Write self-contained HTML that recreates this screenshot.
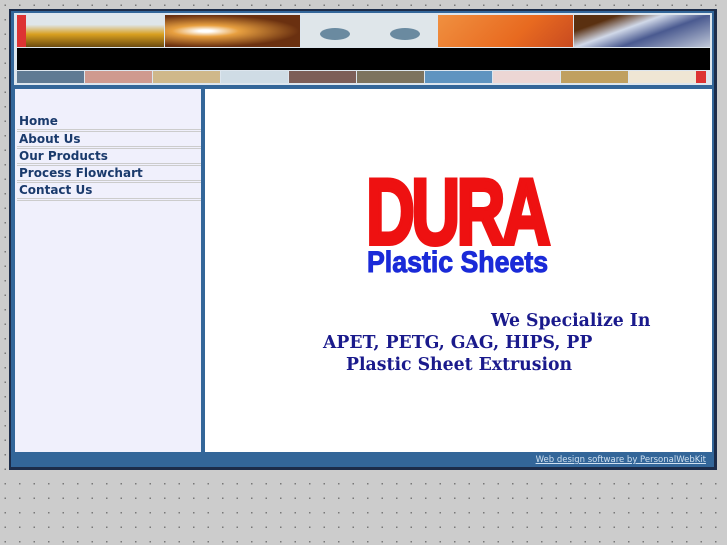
<!DOCTYPE html>
<html><head><style>
body{margin:0;width:727px;height:545px;background-color:#cccccc;background-image:radial-gradient(circle,#777 0.7px,transparent 1px);background-size:14.5px 14.5px;background-position:-2px -2px;position:relative;overflow:hidden;font-family:"DejaVu Sans",sans-serif}
.a{position:absolute}
.t{font-family:'DejaVu Serif',serif;font-weight:bold;font-size:17.3px;color:#1a1a8c;line-height:20px;position:absolute}
</style></head><body>
<div class="a" style="left:9px;top:9px;width:708px;height:461px;background:#1c2c4a"></div>
<div class="a" style="left:11px;top:11px;width:703px;height:456px;background:#336699"></div>
<div class="a" style="left:14px;top:13px;width:698px;height:72px;background:#dde6ee"></div>
<div class="a" style="left:17px;top:15px;width:9px;height:32px;background:#d33"></div>
<div class="a" style="left:26px;top:15px;width:138px;height:32px;background:linear-gradient(180deg,#dfe6ea 30%,#d9a020 60%,#6a4a10)"></div>
<div class="a" style="left:165px;top:15px;width:135px;height:32px;background:radial-gradient(ellipse at 30% 50%,#fff 5%,#e8a040 25%,#6a3010 70%)"></div>
<div class="a" style="left:301px;top:15px;width:136px;height:32px;background:#dfe6ea"></div>
<div class="a" style="left:320px;top:28px;width:30px;height:12px;border-radius:50%;background:#6a8aa0"></div>
<div class="a" style="left:390px;top:28px;width:30px;height:12px;border-radius:50%;background:#6a8aa0"></div>
<div class="a" style="left:438px;top:15px;width:135px;height:32px;background:linear-gradient(135deg,#f09040,#e86a20 60%,#c84a20)"></div>
<div class="a" style="left:574px;top:15px;width:136px;height:32px;background:linear-gradient(160deg,#5a3010 20%,#d0d8e8 40%,#4a5a90 60%,#c0c8d8)"></div>
<div class="a" style="left:17px;top:48px;width:693px;height:22px;background:#000"></div>
<div class="a" style="left:17px;top:71px;height:12px;display:flex;width:693px">
<div style="width:67px;background:#5f7a93;margin-right:1px"></div><div style="width:67px;background:#cf9a8f;margin-right:1px"></div><div style="width:67px;background:#cfb88a;margin-right:1px"></div><div style="width:67px;background:#cfdce5;margin-right:1px"></div><div style="width:67px;background:#7d5e58;margin-right:1px"></div><div style="width:67px;background:#7d735e;margin-right:1px"></div><div style="width:67px;background:#5f94c0;margin-right:1px"></div><div style="width:67px;background:#ecd6d4;margin-right:1px"></div><div style="width:67px;background:#c0a060;margin-right:1px"></div><div style="width:67px;background:#efe6d4"></div><div style="width:10px;background:#d33"></div>
</div>
<div class="a" style="left:15px;top:89px;width:186px;height:363px;background:#f0f0fc"></div>
<div class="a" style="left:205px;top:89px;width:507px;height:363px;background:#fff"></div>
<div class="a" style="left:17px;top:114px;width:184px;font-weight:bold;font-size:12px;color:#1a3a6c">
<div style="height:15px;line-height:15px;padding-left:2px;border-bottom:3px double #ccc">Home</div>
<div style="height:14px;line-height:15px;padding-left:2px;border-bottom:3px double #ccc">About Us</div>
<div style="height:14px;line-height:15px;padding-left:2px;border-bottom:3px double #ccc">Our Products</div>
<div style="height:14px;line-height:15px;padding-left:2px;border-bottom:3px double #ccc">Process Flowchart</div>
<div style="height:15px;line-height:15px;padding-left:2px;border-bottom:3px double #ccc">Contact Us</div>
</div>
<div class="a" style="left:366px;top:165px;font-family:'Liberation Sans',sans-serif;font-weight:bold;font-size:94px;line-height:94px;color:#ee1111;-webkit-text-stroke:4px #ee1111;letter-spacing:-5px;transform:scaleX(0.72);transform-origin:left;white-space:nowrap">DURA</div>
<div class="a" style="left:367px;top:247px;font-family:'Liberation Sans',sans-serif;font-weight:bold;font-size:30px;line-height:32px;color:#1a2ad8;-webkit-text-stroke:1px #1a2ad8;transform:scaleX(0.89);transform-origin:left;white-space:nowrap">Plastic Sheets</div>
<div class="t" style="left:491px;top:311px">We Specialize In</div>
<div class="t" style="left:323px;top:333px">APET, PETG, GAG, HIPS, PP</div>
<div class="t" style="left:346px;top:355px">Plastic Sheet Extrusion</div>
<div class="a" style="right:21px;top:454px;font-size:8.5px;color:#cfe0f0;text-decoration:underline;line-height:12px">Web design software by PersonalWebKit</div>
</body></html>
